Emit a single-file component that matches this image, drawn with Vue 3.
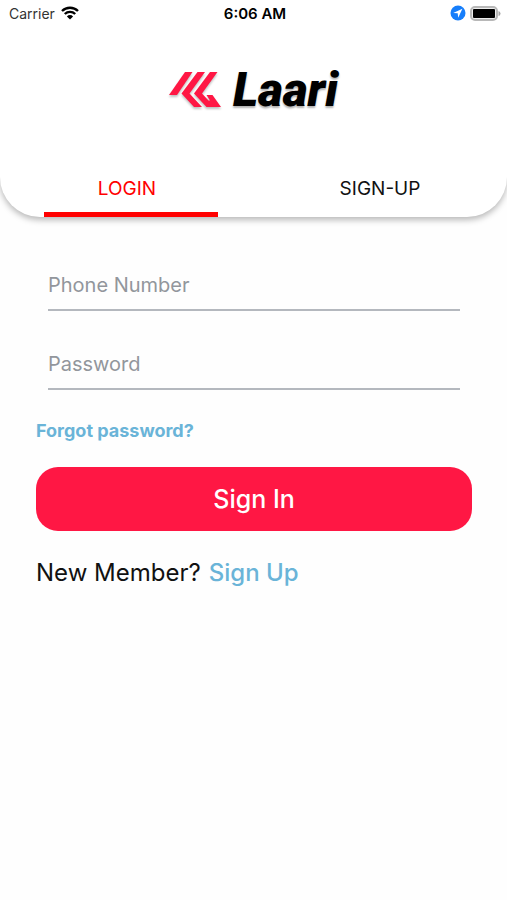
<script setup>
import { ref } from 'vue'

const tab = ref('login')
const phone = ref('')
const password = ref('')
</script>

<template>
  <div class="screen">
    <header class="top">
      <div class="status">
        <div class="carrier">
          <span>Carrier</span>
          <svg class="wifi" viewBox="0 0 18 14" aria-hidden="true">
            <path d="M1 5 A11.5 11.5 0 0 1 17 5" />
            <path d="M3.8 8 A7.5 7.5 0 0 1 14.2 8" />
            <path class="dot" d="M9 13.6 L5.9 10.4 A4.4 4.4 0 0 1 12.1 10.4 Z" />
          </svg>
        </div>
        <time class="clock">6:06 AM</time>
        <div class="indicators">
          <svg class="location" viewBox="0 0 16 16" aria-hidden="true">
            <circle cx="8" cy="8" r="7.5" fill="#167efb" />
            <path d="M12.4 3.8 L3.2 7.9 L7.7 8.3 L8.2 12.8 Z" fill="#fff" />
          </svg>
          <svg class="battery" viewBox="0 0 31 15" aria-hidden="true">
            <rect x="1" y="1" width="26" height="13" rx="4" fill="#eee" stroke="#b8b8b8" stroke-width="2" />
            <rect x="3" y="3" width="22" height="9" rx="1" fill="#000" />
            <path d="M28.5 5 Q30.5 5.5 30.5 7.5 Q30.5 9.5 28.5 10 Z" fill="#a6a6a6" />
          </svg>
        </div>
      </div>

      <h1 class="brand">
        <svg class="mark" viewBox="0 0 52 36" aria-hidden="true">
          <path d="M16 0 H23.5 L8 23 H0 Z" />
          <path d="M28.5 0 H36 L20.5 21.5 L33 35 H25 L12.5 21.5 Z" />
          <path d="M41 0 H48.5 L33 21.5 L39.5 28.5 H41 L37.5 23 H43.5 L52 35 H37.5 L25 21.5 Z" />
        </svg>
        <span>Laari</span>
      </h1>

      <nav class="tabs">
        <button type="button" :class="{ active: tab === 'login' }" @click="tab = 'login'">LOGIN</button>
        <button type="button" :class="{ active: tab === 'signup' }" @click="tab = 'signup'">SIGN-UP</button>
      </nav>
    </header>

    <main>
      <form @submit.prevent>
        <input v-model="phone" class="field" type="tel" placeholder="Phone Number" aria-label="Phone Number" />
        <input v-model="password" class="field" type="password" placeholder="Password" aria-label="Password" />
        <a class="forgot" href="#">Forgot password?</a>
        <button class="submit" type="submit">Sign In</button>
      </form>
      <p class="member">New Member? <a href="#">Sign Up</a></p>
    </main>
  </div>
</template>

<style>
body {
  margin: 0;
  background: #fefefe;
}
</style>

<style scoped>
.screen {
  font-family: Inter, "Liberation Sans", sans-serif;
  color: #111;
  overflow: hidden;
}

.top {
  background: #fff;
  border-radius: 0 0 40px 40px;
  box-shadow: 0 3px 6px rgba(0, 0, 0, 0.28);
}

.status {
  display: grid;
  grid-template-columns: 1fr auto 1fr;
  align-items: center;
  height: 26px;
  padding: 0 6px 0 9px;
  font-size: 14px;
}

.carrier,
.indicators {
  display: flex;
  align-items: center;
  gap: 6px;
}

.carrier {
  color: #333;
}

.indicators {
  justify-content: flex-end;
  gap: 4px;
}

.clock {
  color: #000;
  font-size: 15px;
  font-weight: 600;
}

.wifi {
  width: 18px;
  height: 14px;
  fill: none;
  stroke: #000;
  stroke-width: 2.4;
}

.wifi .dot {
  fill: #000;
  stroke: none;
}

.location {
  width: 16px;
  height: 16px;
}

.battery {
  width: 31px;
  height: 15px;
}

.brand {
  display: flex;
  justify-content: center;
  align-items: center;
  gap: 12px;
  height: 56px;
  margin: 0;
  padding: 36px 0 40px;
  color: #000;
  font-family: Roboto, "Liberation Sans", sans-serif;
  font-size: 48px;
  font-style: italic;
  font-weight: 900;
  line-height: 56px;
  text-shadow: 0 2px 2px rgba(0, 0, 0, 0.3);
}

.mark {
  width: 52px;
  height: 36px;
  fill: #ff1744;
  overflow: visible;
  filter: drop-shadow(0 2px 1px rgba(0, 0, 0, 0.25));
}

.tabs {
  display: flex;
  justify-content: space-between;
  padding: 0 36px 0 44px;
}

.tabs button {
  width: 174px;
  height: 59px;
  padding: 8px 8px 0 0;
  border: 0;
  border-bottom: 5px solid transparent;
  background: none;
  color: #111;
  font: 400 19px/24px Inter, sans-serif;
}

.tabs .active {
  border-color: #f00;
  color: #f00;
}

main {
  padding: 44px 35px 0 36px;
}

form {
  display: flex;
  flex-direction: column;
}

.field {
  height: 48px;
  margin: 0 12px 29px;
  padding: 0;
  border: 0;
  border-bottom: 2px solid #b4b8be;
  border-radius: 0;
  outline: 0;
  background: none;
  color: #111;
  font: 400 20px/26px Inter, sans-serif;
}

.field::placeholder {
  color: #92969c;
  opacity: 1;
}

.forgot {
  align-self: flex-start;
  font-size: 18px;
  font-weight: 700;
  line-height: 24px;
}

a {
  color: #6ab4d8;
  text-decoration: none;
}

.submit {
  height: 64px;
  margin-top: 24px;
  padding: 0;
  border: 0;
  border-radius: 22px;
  background: #ff1744;
  color: #fff;
  font: 500 25px/32px Inter, sans-serif;
}

.member {
  display: flex;
  gap: 8px;
  margin: 26px 0 0;
  font-size: 24px;
  line-height: 32px;
}

.member a {
  font-weight: 500;
}
</style>
